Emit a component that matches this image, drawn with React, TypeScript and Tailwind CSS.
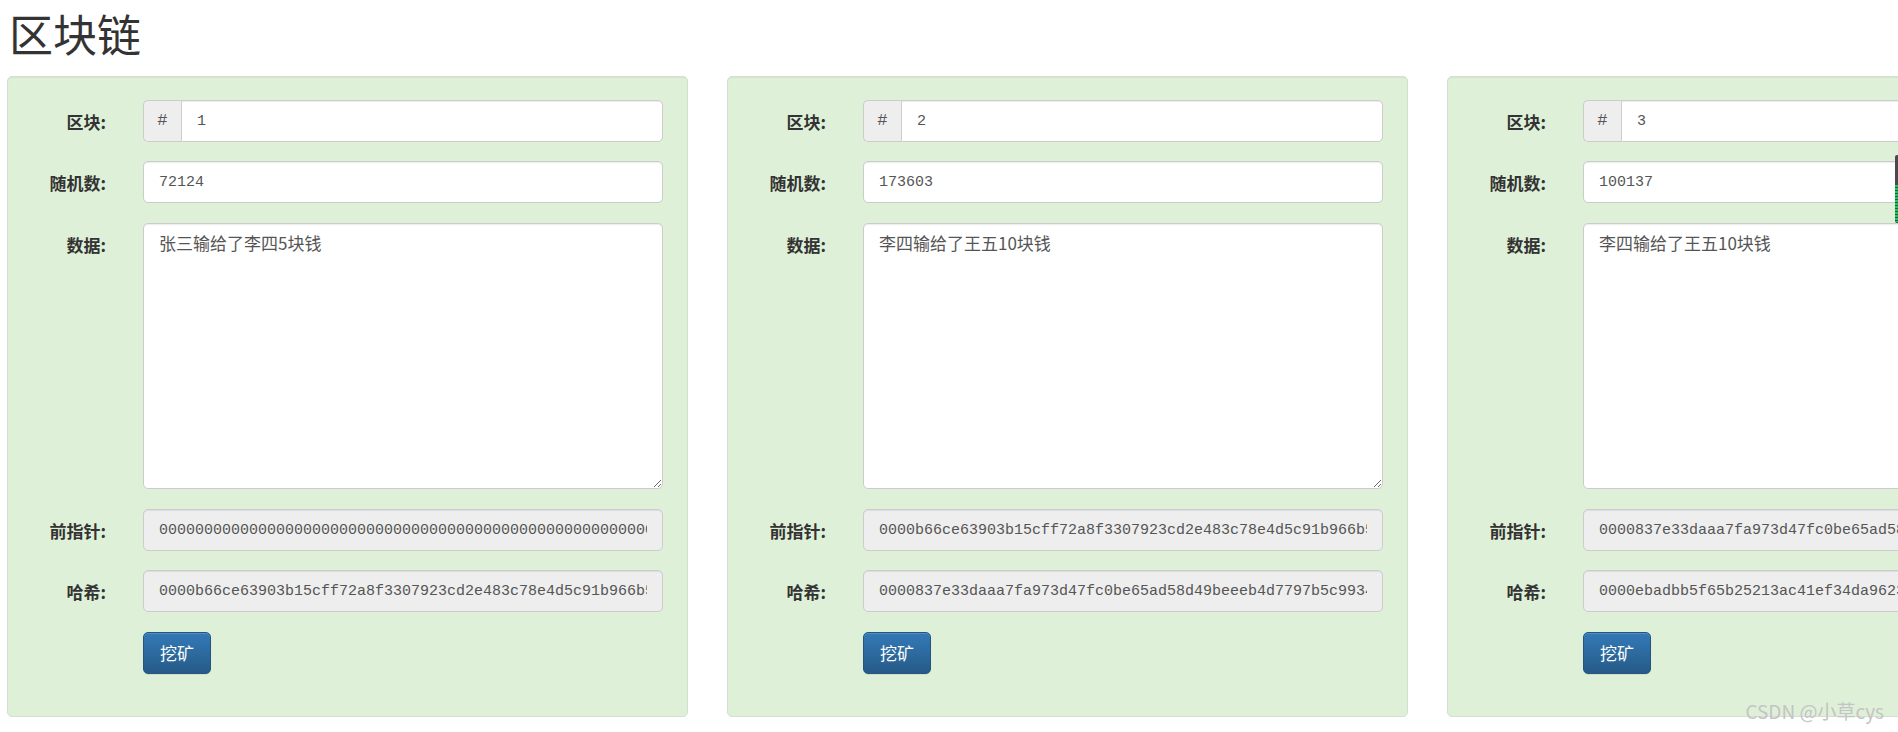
import React from 'react';

type Block = {
  id: number;
  nonce: string;
  data: string;
  prev: string;
  hash: string;
};

const blocks: Block[] = [
  {
    id: 1,
    nonce: '72124',
    data: '张三输给了李四5块钱',
    prev: '0000000000000000000000000000000000000000000000000000000000000000',
    hash: '0000b66ce63903b15cff72a8f3307923cd2e483c78e4d5c91b966b5f1e2a',
  },
  {
    id: 2,
    nonce: '173603',
    data: '李四输给了王五10块钱',
    prev: '0000b66ce63903b15cff72a8f3307923cd2e483c78e4d5c91b966b5f1e2a',
    hash: '0000837e33daaa7fa973d47fc0be65ad58d49beeeb4d7797b5c9934a7c10',
  },
  {
    id: 3,
    nonce: '100137',
    data: '李四输给了王五10块钱',
    prev: '0000837e33daaa7fa973d47fc0be65ad58d49beeeb4d7797b5c9934a7c10',
    hash: '0000ebadbb5f65b25213ac41ef34da9623d0c8e1f7a4b6925e0d3c18f4ab',
  },
];

const sans = "font-['Noto_Sans_CJK_SC',sans-serif]";
const mono = "font-['Liberation_Mono','Noto_Sans_CJK_SC',monospace]";
const inputBase =
  'h-[42px] w-full rounded-[5px] border border-[#ccc] px-[15px] text-[15px] text-[#555] shadow-[inset_0_1px_1px_rgba(0,0,0,0.075)] outline-none';

function Row({ label, children, className }: { label: string; children: React.ReactNode; className?: string }) {
  return (
    <div className={`flex ${className ?? ''}`}>
      <label className="w-[74px] shrink-0 pt-[9px] text-right text-[17px] leading-[25px] font-bold text-[#333]">
        {label}
      </label>
      <div className="ml-[37px] flex-1">{children}</div>
    </div>
  );
}

function BlockCard({ block }: { block: Block }) {
  return (
    <div className="w-[681px] shrink-0 rounded-[5px] border border-[#d5dfcf] bg-[#dff0d8] px-[24px] pt-[23px] pb-[42px] shadow-[inset_0_1px_1px_rgba(0,0,0,0.05)]">
      <Row label="区块:">
        <div className="flex h-[42px]">
          <span className={`flex w-[41px] items-center justify-center rounded-l-[5px] border border-r-0 border-[#ccc] bg-[#eee] text-[17px] text-[#555] ${mono}`}>
            #
          </span>
          <input
            readOnly
            value={block.id}
            className={`${inputBase} rounded-l-none bg-white ${mono}`}
          />
        </div>
      </Row>
      <Row label="随机数:" className="mt-[19px]">
        <input readOnly value={block.nonce} className={`${inputBase} bg-white ${mono}`} />
      </Row>
      <Row label="数据:" className="mt-[20px]">
        <textarea
          readOnly
          value={block.data}
          className={`block h-[266px] w-full rounded-[5px] border border-[#ccc] bg-white px-[15px] py-[6px] text-[17px] leading-[25px] text-[#555] shadow-[inset_0_1px_1px_rgba(0,0,0,0.075)] outline-none ${sans}`}
        />
      </Row>
      <Row label="前指针:" className="mt-[20px]">
        <input readOnly value={block.prev} className={`${inputBase} bg-[#eee] ${mono}`} />
      </Row>
      <Row label="哈希:" className="mt-[19px]">
        <input readOnly value={block.hash} className={`${inputBase} bg-[#eee] ${mono}`} />
      </Row>
      <div className="mt-[20px] pl-[111px]">
        <button className="h-[42px] w-[68px] rounded-[5px] border border-[#245580] bg-gradient-to-b from-[#337ab7] to-[#265a88] text-[17px] text-white shadow-[inset_0_1px_0_rgba(255,255,255,0.15),0_1px_1px_rgba(0,0,0,0.075)]">
          挖矿
        </button>
      </div>
    </div>
  );
}

export default function App() {
  return (
    <div className={`relative h-[732px] w-full overflow-hidden bg-white pl-[7px] ${sans}`}>
      <h1 className="mt-[8px] h-[50px] pl-[2px] text-[44px] leading-[50px] font-normal text-[#333]">
        区块链
      </h1>
      <div className="mt-[18px] flex gap-[39px]">
        {blocks.map((b) => (
          <BlockCard key={b.id} block={b} />
        ))}
      </div>

      {/* side widget peeking in from the window edge */}
      <div className="absolute top-[155px] right-0 flex h-[68px] w-[3px] flex-col overflow-hidden rounded-l-[2px] bg-[#4a4a4a]">
        <div className="mt-[30px] h-[37px] w-full bg-[repeating-linear-gradient(180deg,#22c55e_0px,#22c55e_2px,#166534_2px,#166534_3px)]" />
      </div>

      <div className="absolute right-[14px] bottom-[10px] text-[19px] leading-[22px] text-[#c4c4c4]">
        CSDN @小草cys
      </div>
    </div>
  );
}
